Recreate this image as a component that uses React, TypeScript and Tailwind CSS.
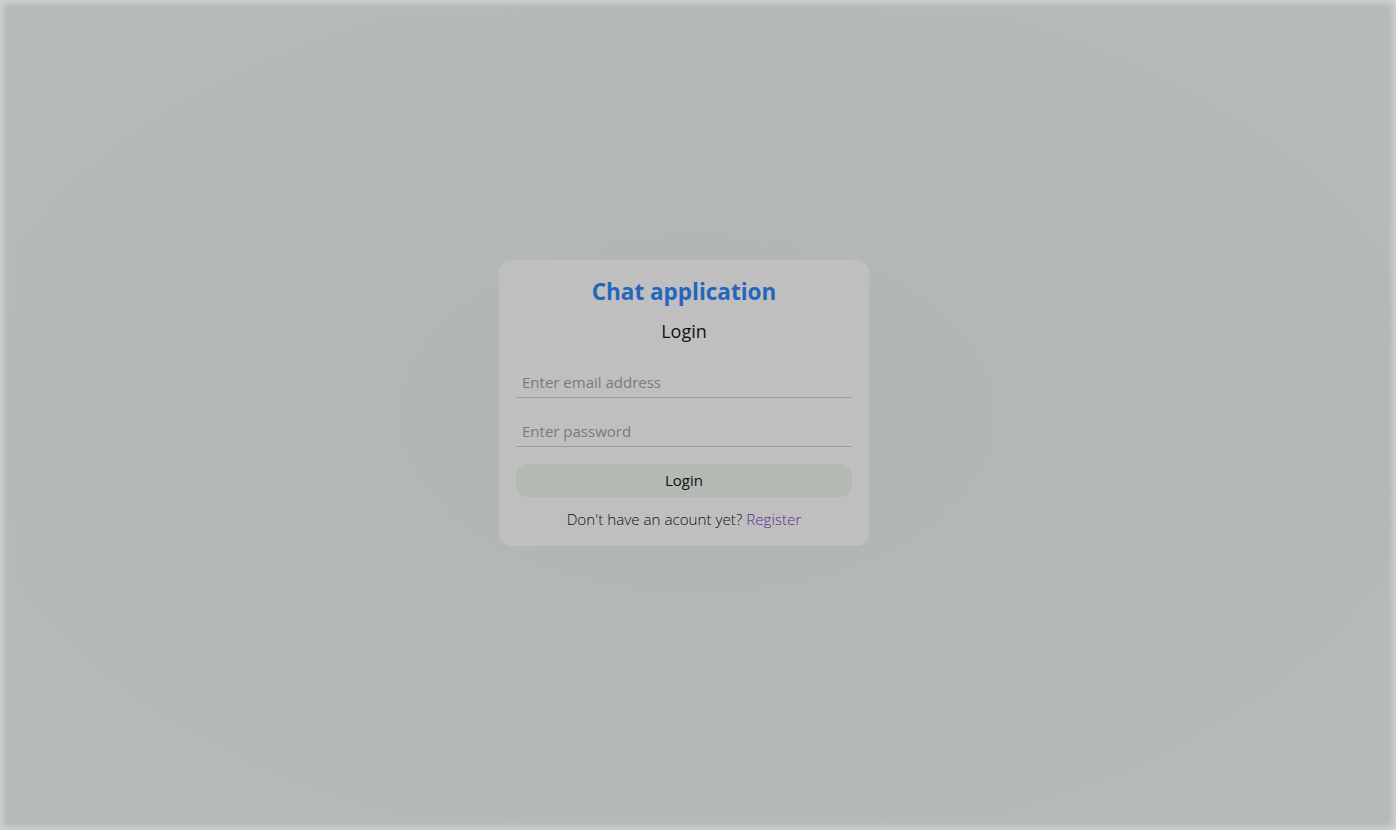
import { useState } from 'react'

export default function App() {
  const [email, setEmail] = useState('')
  const [password, setPassword] = useState('')

  return (
    <div
      className="h-[830px] w-full flex items-center justify-center pr-[28px] bg-[radial-gradient(ellipse_at_center,#b0b5b5_0%,#b2b7b7_45%,#b4b9b9_80%)] shadow-[inset_0_0_6px_3px_#cfd3d3] font-['Open_Sans',sans-serif]"
    >
      <div className="w-[370px] rounded-xl bg-[#bfbfbf] px-[17px] pt-[14px] pb-[16px] flex flex-col items-center -mt-[24px]">
        <h1 className="text-[22.5px] leading-[36px] font-bold text-[#2565bd]">Chat application</h1>
        <h2 className="mt-[8px] text-[18px] leading-[27px] text-[#111]">Login</h2>

        <input
          type="email"
          value={email}
          onChange={(e) => setEmail(e.target.value)}
          placeholder="Enter email address"
          className="mt-[22px] w-full bg-transparent border-b border-[#9c9c9c] px-[6px] py-[5px] pb-[4px] text-[15px] leading-[21px] outline-none placeholder:text-[#7a7a7a]"
        />
        <input
          type="password"
          value={password}
          onChange={(e) => setPassword(e.target.value)}
          placeholder="Enter password"
          className="mt-[18px] w-full bg-transparent border-b border-[#9c9c9c] px-[6px] py-[5px] pb-[4px] text-[15px] leading-[21px] outline-none placeholder:text-[#7a7a7a]"
        />

        <button className="mt-[17px] w-full h-[33px] rounded-xl bg-[#b3bab3] text-[15px] text-[#111]">
          Login
        </button>

        <p className="mt-[11px] text-[15.2px] leading-[22px] font-light text-[#111]">
          Don't have an acount yet? <a className="text-[#5b2a8c] cursor-pointer">Register</a>
        </p>
      </div>
    </div>
  )
}
